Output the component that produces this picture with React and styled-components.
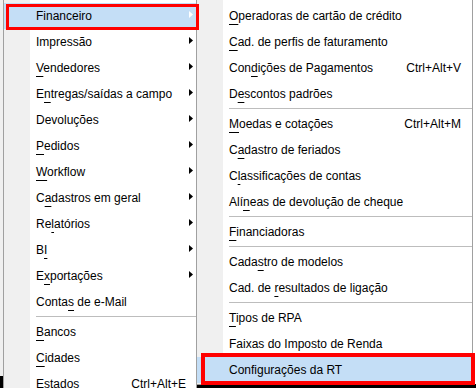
import React from 'react';
import styled, { createGlobalStyle } from 'styled-components';

const Global = createGlobalStyle`
  html, body { margin: 0; padding: 0; }
  body { background: #fff; font-family: "Liberation Sans", Arial, sans-serif; }
`;

const Desktop = styled.div`
  position: relative;
  display: flex;
  align-items: flex-start;
  width: 476px;
  height: 388px;
  overflow: hidden;
  padding-left: 3px;
  box-sizing: border-box;
  background:
    linear-gradient(#000, #000) left bottom / 3px 12px no-repeat,
    linear-gradient(#000, #000) left bottom / 100% 4px no-repeat,
    linear-gradient(to right, #f0f0f0 3px, #fff 3px);
`;

const Menu = styled.div`
  flex: none;
  width: ${(p) => p.$width}px;
  margin-top: -1px;
  margin-left: ${(p) => (p.$overlap ? -1 : 0)}px;
  padding: 3px 0 ${(p) => p.$padBottom}px;
  border: 1px solid #a0a0a0;
  box-sizing: border-box;
  background: linear-gradient(to right, #f0f0f0 26px, #fff 26px);
  font: 12px "Liberation Sans", Arial, sans-serif;
  color: #000;
`;

const Item = styled.div`
  display: flex;
  align-items: center;
  height: 26px;
  padding-left: 32px;
  background: ${(p) => (p.$active ? '#c4def6' : 'transparent')};
  white-space: nowrap;
  line-height: 26px;
`;

const Label = styled.span`
  flex: 1;
`;

const Shortcut = styled.span`
  flex: none;
`;

const Slot = styled.span`
  flex: none;
  width: ${(p) => p.$w}px;
  height: 26px;
  display: flex;
  justify-content: center;
  align-items: center;
`;

const Arrow = styled.svg`
  display: block;
  margin-bottom: 4px;
  fill: ${(p) => (p.$active ? '#fff' : '#000')};
`;

const Separator = styled.div`
  height: 1px;
  margin: 1px 0 2px 32px;
  background: #bdbdbd;
`;

const Key = styled.span`
  text-decoration: underline;
  text-decoration-thickness: 1px;
  text-underline-offset: 4px;
`;

const Callout = styled.div`
  position: absolute;
  left: ${(p) => p.$x}px;
  top: ${(p) => p.$y}px;
  width: ${(p) => p.$w}px;
  height: ${(p) => p.$h}px;
  border: ${(p) => p.$t}px solid #ff0000;
  box-sizing: border-box;
  pointer-events: none;
`;

function renderLabel(s) {
  const i = s.indexOf('&');
  if (i < 0) return s;
  return (
    <>
      {s.slice(0, i)}
      <Key>{s[i + 1]}</Key>
      {s.slice(i + 2)}
    </>
  );
}

const mainItems = [
  { l: 'Financeiro', sub: true, active: true },
  { l: 'Impressão', sub: true },
  { l: '&Vendedores', sub: true },
  { l: 'E&ntregas/saídas a campo', sub: true },
  { l: 'Devoluções', sub: true },
  { l: '&Pedidos', sub: true },
  { l: '&Workflow', sub: true },
  { l: 'C&adastros em geral', sub: true },
  { l: 'Re&latórios', sub: true },
  { l: 'B&I', sub: true },
  { l: 'E&xportações', sub: true },
  { l: 'Conta&s de e-Mail' },
  'sep',
  { l: '&Bancos' },
  { l: '&Cidades' },
  { l: 'Estados', k: 'Ctrl+Alt+E' },
];

const subItems = [
  { l: '&Operadoras de cartão de crédito' },
  { l: '&Cad. de perfis de faturamento' },
  { l: 'Con&dições de Pagamentos', k: 'Ctrl+Alt+V' },
  { l: 'D&escontos padrões' },
  'sep',
  { l: '&Moedas e cotações', k: 'Ctrl+Alt+M' },
  { l: 'C&adastro de feriados' },
  { l: 'C&lassificações de contas' },
  { l: 'Alí&neas de devolução de cheque' },
  'sep',
  { l: '&Financiadoras' },
  'sep',
  { l: 'Cada&stro de modelos' },
  { l: 'Cad. de &resultados de ligação' },
  'sep',
  { l: '&Tipos de RPA' },
  { l: 'Faixas do Imposto de Renda' },
  { l: 'Configurações da RT', active: true },
];

function MenuList({ items, slot }) {
  return items.map((it, idx) =>
    it === 'sep' ? (
      <Separator key={idx} />
    ) : (
      <Item key={idx} $active={it.active}>
        <Label>{renderLabel(it.l)}</Label>
        {it.k && <Shortcut>{it.k}</Shortcut>}
        <Slot $w={slot}>
          {it.sub && (
            <Arrow $active={it.active} width="4" height="7" viewBox="0 0 4 7">
              <polygon points="0,0 4,3.5 0,7" />
            </Arrow>
          )}
        </Slot>
      </Item>
    )
  );
}

export default function App() {
  return (
    <>
      <Global />
      <Desktop>
        <Menu $width={194} $padBottom={3}>
          <MenuList items={mainItems} slot={10} />
        </Menu>
        <Menu $width={277} $overlap $padBottom={1}>
          <MenuList items={subItems} slot={11} />
        </Menu>
        <Callout $x={6} $y={4} $w={193} $h={26} $t={3} />
        <Callout $x={201} $y={353} $w={274} $h={32} $t={4} />
      </Desktop>
    </>
  );
}
